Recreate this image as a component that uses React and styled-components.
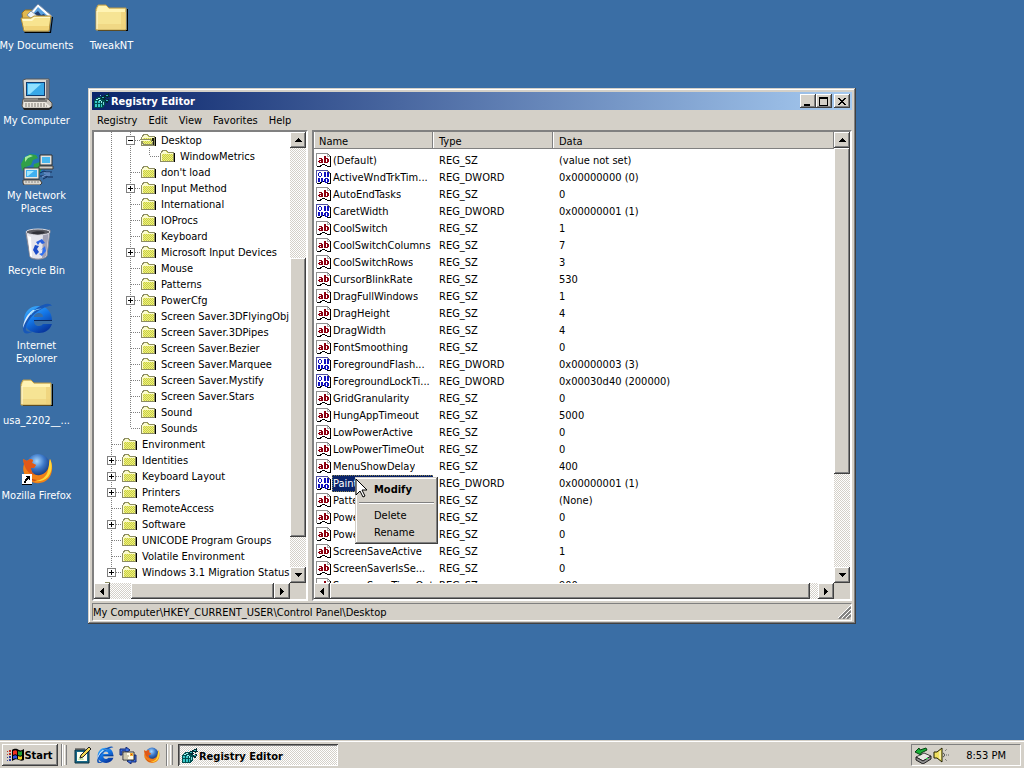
import React from 'react';
import styled, { createGlobalStyle, css } from 'styled-components';

const FACE = '#d4d0c8';
const SHADOW = '#808080';
const DARK = '#404040';
const NAVY = '#0a246a';

const GlobalStyle = createGlobalStyle`
  * { box-sizing: border-box; }
  body {
    margin: 0;
    font: 11px/13px "DejaVu Sans Condensed", "DejaVu Sans", "Liberation Sans", sans-serif;
    color: #000;
  }
  button { font: inherit; color: inherit; border: 0; padding: 0; background: none; }
  svg { display: block; flex: none; }
`;

const raised = css`
  background: ${FACE};
  box-shadow: inset -1px -1px ${DARK}, inset 1px 1px ${FACE}, inset -2px -2px ${SHADOW}, inset 2px 2px #fff;
`;
const buttonEdge = css`
  background: ${FACE};
  box-shadow: inset -1px -1px ${DARK}, inset 1px 1px #fff, inset -2px -2px ${SHADOW};
`;
const checker = css`
  background: repeating-conic-gradient(#fff 0 25%, ${FACE} 0 50%) 0 0 / 2px 2px;
`;

const Screen = styled.div`
  display: flex;
  flex-direction: column;
  height: 100vh;
  overflow: hidden;
  background: #3a6ea5;
`;
const Desktop = styled.main`
  position: relative;
  flex: 1;
  min-height: 0;
`;
const Shortcuts = styled.div`
  display: grid;
  grid-auto-flow: column;
  grid-template-rows: repeat(7, 75px);
  grid-auto-columns: 75px;
`;
const Shortcut = styled.button`
  display: flex;
  flex-direction: column;
  align-items: center;
  gap: 4px;
  padding-top: 3px;
  padding-right: 2px;
  color: #fff;
`;
const ShortcutLabel = styled.span`
  white-space: pre;
  text-align: center;
`;

const Window = styled.section`
  position: absolute;
  inset: 88px 168px 116px 88px;
  display: flex;
  flex-direction: column;
  padding: 4px 4px 3px;
  ${raised}
`;
const TitleBar = styled.header`
  display: flex;
  align-items: center;
  height: 18px;
  padding: 0 2px 0 1px;
  background: linear-gradient(90deg, ${NAVY}, #a6caf0);
  color: #fff;
`;
const Title = styled.h1`
  flex: 1;
  margin: 0 0 0 1px;
  font-size: 11px;
  line-height: 13px;
`;
const TitleButton = styled.button`
  width: 16px;
  height: 14px;
  display: flex;
  align-items: center;
  justify-content: center;
  margin-left: ${(p) => (p.$apart ? '2px' : '0')};
  ${buttonEdge}
`;
const MenuBar = styled.nav`
  display: flex;
  height: 20px;
  align-items: center;
`;
const MenuBarItem = styled.button`
  padding: 0 5px;
  margin-right: 1px;
`;
const Panes = styled.div`
  flex: 1;
  min-height: 0;
  display: flex;
  gap: 4px;
`;
const Pane = styled.div`
  display: flex;
  flex-direction: column;
  flex: ${(p) => p.$flex};
  min-width: 0;
  border: 2px solid;
  border-color: ${SHADOW} #fff #fff ${SHADOW};
  background: #fff;
`;
const PaneBody = styled.div`
  flex: 1;
  min-height: 0;
  display: flex;
`;
const PaneContent = styled.div`
  flex: 1;
  min-width: 0;
  overflow: hidden;
`;
const ScrollTrack = styled.div`
  display: flex;
  flex: ${(p) => (p.$vertical ? 'none' : 1)};
  flex-direction: ${(p) => (p.$vertical ? 'column' : 'row')};
  width: ${(p) => (p.$vertical ? '16px' : 'auto')};
  height: ${(p) => (p.$vertical ? 'auto' : '16px')};
  ${checker}
`;
const ScrollButton = styled.button`
  flex: none;
  width: 16px;
  height: 16px;
  display: flex;
  align-items: center;
  justify-content: center;
  ${buttonEdge}
`;
const Thumb = styled.div`
  flex: ${(p) => p.$size} 0 0;
  ${buttonEdge}
`;
const Space = styled.div`
  flex: ${(p) => p.$size} 0 0;
`;
const BottomScroll = styled.div`
  display: flex;
`;
const Corner = styled.div`
  width: 16px;
  height: 16px;
  background: ${FACE};
`;

const TreeList = styled.ul`
  list-style: none;
  margin: 0;
  padding: 0 0 0 8px;
`;
const TreeItem = styled.li`
  display: flex;
  align-items: center;
  height: 16px;
  white-space: nowrap;
`;
const TreeLabel = styled.span`
  margin-left: 3px;
`;

const Table = styled.table`
  width: 100%;
  table-layout: fixed;
  border-collapse: separate;
  border-spacing: 0;
  tbody::before {
    content: '';
    display: block;
    height: 3px;
  }
`;
const HeadCell = styled.th`
  width: ${(p) => p.$width || 'auto'};
  height: 17px;
  padding: 1px 0 0 ${(p) => p.$pad};
  font-weight: normal;
  text-align: left;
  background: ${FACE};
  box-shadow: inset -1px -1px ${SHADOW}, inset 1px 0 #fff;
`;
const Cell = styled.td`
  position: relative;
  height: 17px;
  padding: 0 0 0 6px;
  white-space: nowrap;
`;
const NameCell = styled(Cell)`
  padding: 0 0 0 2px;
`;
const NameBox = styled.div`
  display: flex;
  align-items: center;
  height: 17px;
`;
const NameText = styled.span`
  padding: 1px 0 1px 1px;
  height: 17px;
  line-height: 15px;
  overflow: hidden;
  flex: ${(p) => (p.$selected ? 1 : 'none')};
  background: ${(p) => (p.$selected ? NAVY : 'transparent')};
  color: ${(p) => (p.$selected ? '#fff' : '#000')};
  outline: ${(p) => (p.$selected ? '1px dotted #8c8450' : 'none')};
  outline-offset: -1px;
`;

const ContextMenu = styled.div`
  position: absolute;
  z-index: 2;
  top: 2px;
  left: 41px;
  width: 83px;
  padding: 4px 3px 3px;
  display: flex;
  flex-direction: column;
  ${raised}
`;
const ContextItem = styled.button`
  height: 17px;
  padding-left: 16px;
  text-align: left;
  font-weight: ${(p) => (p.$strong ? 'bold' : 'normal')};
`;
const Divider = styled.hr`
  width: 75px;
  margin: 4px 1px 3px;
  border: 0;
  border-top: 1px solid ${SHADOW};
  border-bottom: 1px solid #fff;
`;
const Pointer = styled.svg`
  position: absolute;
  z-index: 3;
  top: 3px;
  left: 41px;
`;

const StatusBar = styled.footer`
  display: flex;
  align-items: center;
  height: 18px;
  margin-top: 2px;
  border: 1px solid;
  border-color: ${SHADOW} #fff #fff ${SHADOW};
`;
const StatusText = styled.span`
  flex: 1;
`;

const Taskbar = styled.footer`
  display: flex;
  align-items: center;
  height: 28px;
  padding: 2px 3px 0 2px;
  background: ${FACE};
  box-shadow: inset 0 1px ${FACE}, inset 0 2px #fff;
`;
const StartButton = styled.button`
  display: flex;
  align-items: center;
  justify-content: center;
  width: 56px;
  height: 22px;
  font-weight: bold;
  ${buttonEdge}
`;
const Ridge = styled.div`
  width: 3px;
  height: 20px;
  margin: 0 ${(p) => p.$after} 0 ${(p) => p.$before};
  border-left: 1px solid #fff;
  border-right: 1px solid ${SHADOW};
`;
const Seam = styled.div`
  width: 2px;
  height: 22px;
  margin-left: ${(p) => p.$before};
  border-left: 1px solid ${SHADOW};
  border-right: 1px solid #fff;
`;
const QuickLaunch = styled.div`
  display: flex;
  gap: 5px;
`;
const QuickButton = styled.button`
  width: 18px;
  height: 18px;
  display: flex;
  align-items: center;
  justify-content: center;
`;
const TaskButton = styled.button`
  display: flex;
  align-items: center;
  gap: 1px;
  width: 160px;
  height: 22px;
  padding: 2px 0 0 3px;
  font-weight: bold;
  ${checker}
  box-shadow: inset 1px 1px ${DARK}, inset -1px -1px #fff, inset 2px 2px ${SHADOW};
`;
const Tray = styled.div`
  display: flex;
  align-items: center;
  gap: 1px;
  height: 22px;
  margin-left: auto;
  padding: 0 14px 0 2px;
  border: 1px solid;
  border-color: ${SHADOW} #fff #fff ${SHADOW};
`;
const Clock = styled.time`
  margin-left: 16px;
`;

const ARROWS = {
  up: 'M3 0h1v1h1v1h1v1h1v1H0V3h1V2h1V1h1z',
  down: 'M0 0h7v1H6v1H5v1H4v1H3V3H2V2H1V1H0z',
  left: 'M3 0h1v7H3V6H2V5H1V4H0V3h1V2h1V1h1z',
  right: 'M0 0h1v1h1v1h1v1h1v1H3v1H2v1H1v1H0z',
};

function Arrow({ dir }) {
  const tall = dir === 'left' || dir === 'right';
  return (
    <svg width={tall ? 4 : 7} height={tall ? 7 : 4} shapeRendering="crispEdges">
      <path d={ARROWS[dir]} />
    </svg>
  );
}

function ScrollBar({ vertical, parts }) {
  return (
    <ScrollTrack $vertical={vertical}>
      <ScrollButton aria-label={vertical ? 'Scroll up' : 'Scroll left'}>
        <Arrow dir={vertical ? 'up' : 'left'} />
      </ScrollButton>
      <Space $size={parts[0]} />
      <Thumb $size={parts[1]} />
      <Space $size={parts[2]} />
      <ScrollButton aria-label={vertical ? 'Scroll down' : 'Scroll right'}>
        <Arrow dir={vertical ? 'down' : 'right'} />
      </ScrollButton>
    </ScrollTrack>
  );
}

/* ---- small icons ---- */

function TreeFolder({ open }) {
  return (
    <svg width="18" height="16" viewBox="0 0 18 16" shapeRendering="crispEdges">
      <defs>
        <pattern id="dither" width="2" height="2" patternUnits="userSpaceOnUse">
          <path d="M0 0h2v2H0z" fill="#f4f478" />
          <path d="M0 0h1v1H0zM1 1h1v1H1z" fill="#c4cc4c" />
        </pattern>
      </defs>
      <path d="M2 14h14V5h-1v8H2z" fill="#000" />
      <path d="M1 5h1V3h1V2h5v1h1v1h6v10H1z" fill="#8c8c64" />
      <path d="M2 5h1V4h1V3h4v1h1v1h5v8H2z" fill="url(#dither)" />
      <path d="M2 5h1V4h1V3h3v1h1v1h6v1H3v7H2z" fill="#fbfbd0" />
      {open && (
        <>
          <path d="M12 6h2v7h-1V9h-1z" fill="#202010" />
          <path d="M0 7h11v1h1v2h1v3H3v-1H2v-2H1V8H0z" fill="#8c8c64" />
          <path d="M2 8h9v2h1v2H4v-1H3V9H2z" fill="url(#dither)" />
          <path d="M1 8h9v1H1z" fill="#fbfbd0" />
        </>
      )}
    </svg>
  );
}

function Connector({ line, branch, box }) {
  return (
    <svg width="19" height="16" shapeRendering="crispEdges" stroke="#808080" fill="none">
      {line !== 'none' && (
        <path d={line === 'half' ? 'M9.500 0V8' : 'M9.500 0V16'} strokeDasharray="1 1" />
      )}
      {branch && <path d="M10 8.500H19" strokeDasharray="1 1" />}
      {box && (
        <>
          <rect x="5.500" y="4.500" width="8" height="8" fill="#fff" />
          <path d="M7 8.500h5" stroke="#000" />
          {box === 'plus' && <path d="M9.500 6v5" stroke="#000" />}
        </>
      )}
    </svg>
  );
}

function ValueIcon({ binary }) {
  return (
    <svg width="16" height="16" viewBox="0 0 16 16" shapeRendering="crispEdges">
      <path d="M13 2h1v1h1v11h-4v-1H9v-1H6v1H5v1H1v-1h3v-1h2v-1h3v1h2v1h3V4h-1z" fill="#000" />
      <path d="M0 0h12v1H1v12H0z" fill={binary ? '#5050a0' : '#909090'} />
      <path d="M12 1h1v1h-1zM13 2h1v1h-1z" fill="#606060" />
      <path d="M1 1h11v2h2v10h-3v-1H9v-1H6v1H4v1H1z" fill="#fff" />
      <path d="M11 1h1v2h2v1h-3z" fill="#b0b0b0" />
      {binary ? (
        <path
          d="M3 2h2v1h1v3H5v1H3V6H2V3h1zM3 3v3h2V3zM8 2h2v5H8zM11 2h2v5h-2zM2 8h2v4H2zM5 8h2v4H5zM9 8h3v1h1v3h-1v1H9v-1H8V9h1zM10 9v3h1V9z"
          fill="#1010c0"
          fillRule="evenodd"
        />
      ) : (
        <path
          d="M3 5h3v1h1v4H3V9H2V8h1V7h2V6H3zM4 8v1h1V8zM8 3h2v2h2v1h1v3h-1v1H8zM10 6v3h1V6z"
          fill="#8c0010"
          fillRule="evenodd"
        />
      )}
    </svg>
  );
}

function RegeditIcon() {
  return (
    <svg width="17" height="16" viewBox="0 0 17 16" shapeRendering="crispEdges">
      <path d="M1 7h1V6h1V5h1V4h4v2h4v7h-1v1h-1v1H1z" fill="#005050" />
      <path d="M2 8h2v2H2zM5 8h2v2H5zM2 11h2v3H2zM5 11h2v3H5zM8 11h1v3H8z" fill="#38c8c8" />
      <path d="M3 6h2v1H3zM5 5h2v1H5zM6 7h2v1H6zM8 8h1v2H8z" fill="#a0f4f4" />
      <path d="M8 4h1V3h2V2h1v3h1v1h-1v1h-2V6H8zM12 2h1V1h2V0h1v3h1v1h-2v1h-1V4h-2zM12 7h2V6h2v2h-1v2h-2V9h-1z" fill="#002c34" />
      <path d="M9 4h2v1H9zM13 2h2v1h-2zM13 7h2v1h-2z" fill="#38b8b8" />
      <path d="M7 2h1v1H7zM10 9h1v3h-1z" fill="#78d8d8" />
    </svg>
  );
}

function FlagIcon() {
  return (
    <svg width="17" height="16" viewBox="0 0 17 16">
      <path d="M5 3c3-2 5-1 7 0s3 0 5-1v11c-2 1-3 1-5 0s-4-1-7 1z" fill="#000" />
      <path d="M6 4c2-1 3-1 4 0v4C9 7 8 7 6 8z" fill="#f03020" />
      <path d="M11 4c2 1 3 1 4 0v4c-1 1-2 1-4 0z" fill="#20a030" />
      <path d="M6 9c2-1 3-1 4 0v3c-1-1-2-1-4 0z" fill="#3050e0" />
      <path d="M11 9c2 1 3 1 4 0v3c-1 1-2 1-4 0z" fill="#f0d020" />
      <path d="M0 4h1v1H0zM2 3h2v2H2zM0 7h1v1H0zM2 6h2v2H2z" fill="#c03020" />
      <path d="M0 10h1v1H0zM2 9h2v2H2zM0 13h1v1H0zM2 12h2v2H2z" fill="#3040a0" />
    </svg>
  );
}

function IeMark({ size }) {
  return (
    <svg width={size} height={size} viewBox="0 0 32 32">
      <defs>
        <linearGradient id={`ie${size}`} x1="0" y1="0" x2="0.600" y2="1">
          <stop offset="0" stopColor="#48b8ff" />
          <stop offset="0.500" stopColor="#1478e8" />
          <stop offset="1" stopColor="#0838a0" />
        </linearGradient>
      </defs>
      <path
        fillRule="evenodd"
        d="M17 3c9 0 14 6 14 15H13c0 3 2 5 5 5 2 0 3-1 4-2h9c-2 6-7 9-13 9C9 30 3 25 3 17S9 3 17 3zM13 14h9c0-3-2-4-4-4s-5 1-5 4z"
        fill={`url(#ie${size})`}
      />
      <path
        d="M31 3c-2-4-9-2-15 2C8 10 1 20 2 26c0 6 6 5 11 2-4 1-7 1-8-1-1-5 4-13 11-18C23 4 29 2 31 3z"
        fill="#1858b8"
      />
      <path d="M12 7C6 11 2 19 2 25c2-6 6-13 12-18z" fill="#d8ecff" />
      <path d="M9 11c3-4 8-6 12-5-5 0-8 2-11 6z" fill="#8cd4ff" />
      <path d="M13 17h18v1H13z" fill="#082860" />
    </svg>
  );
}

function FirefoxMark({ size, shortcut }) {
  return (
    <svg width={size} height={size} viewBox="0 0 32 32">
      <defs>
        <radialGradient id={`ff${size}`} cx="0.450" cy="0.300" r="0.700">
          <stop offset="0" stopColor="#a8d8ff" />
          <stop offset="0.450" stopColor="#3c78c8" />
          <stop offset="1" stopColor="#0c2868" />
        </radialGradient>
      </defs>
      <circle cx="17" cy="13" r="12" fill={`url(#ff${size})`} />
      <path
        d="M29 6c3 6 3 14-1 19-5 6-14 7-20 2C3 23 1 17 3 11l-1-5 4 2c2-2 4-2 6-1l-1 3 4 2-2 3h-3c0 5 4 8 9 7 5-1 8-5 9-9 0-3 0-5 1-7z"
        fill="#f08018"
      />
      <path d="M29 6c3 6 2 13-2 18-4 4-9 5-14 4 7 0 13-4 14-11 1-4 1-7 2-11z" fill="#ffd838" />
      <path d="M3 11l-1-5 4 2c2-2 4-2 6-1l-1 3 4 2-2 3h-3c0 4 2 6 5 7-6 0-10-4-12-11z" fill="#e05818" />
      <path d="M5 20c2 4 6 7 11 7-3 2-9 0-11-7z" fill="#b83810" />
      {shortcut && (
        <g shapeRendering="crispEdges">
          <path d="M1 21h10v11H1z" fill="#000" />
          <path d="M1 21h10v10H1z" fill="#fff" />
          <path d="M5 23h4v4H8v-1H7v1H6v1H5v2H3v-2h1v-2h1v-1h1v-1H5z" fill="#000" />
        </g>
      )}
    </svg>
  );
}

/* ---- desktop icons ---- */

function BigFolder() {
  return (
    <svg width="34" height="32" viewBox="0 0 34 32">
      <path d="M3 28h30V6h-1v21H3z" fill="#000" />
      <path d="M1 6l2-4h8l3 3h17v22H1z" fill="#f6e494" stroke="#b89848" />
      <path d="M2 7l2-4h7l3 3h16v3H2z" fill="#fff4b4" />
      <path d="M26 9h5v17h-5z" fill="#eed078" opacity="0.700" />
      <path d="M2 21h28v5H2z" fill="#ecd07c" opacity="0.600" />
      <path d="M2 8v18" stroke="#fffce0" />
    </svg>
  );
}

function DocumentsIcon() {
  return (
    <svg width="34" height="32" viewBox="0 0 34 32">
      <path d="M2 10l3-3h7l3 3h14v18H4z" fill="#e0b850" stroke="#987020" />
      <path d="M18 1l14 12-7 8L8 12z" fill="#fff" stroke="#7088a8" />
      <path d="M18 4l10 9-7 7-9-8z" fill="#58a0e0" />
      <path d="M14 11l4-3 3 4 3-1 2 3-5 5z" fill="#203c70" />
      <path d="M11 8l-4 4 14 12 4-5z" fill="#eef4fa" stroke="#8898a8" />
      <path d="M1 15h10l3-2h17l-2 15H4z" fill="#f8e490" stroke="#b08c38" />
      <path d="M2 16h9l3-2h16v1H15l-3 3H3z" fill="#fff8c8" />
      <path d="M4 29h26l2-15h1l-2 16H5z" fill="#000" />
      <path d="M4 23h25l-1 4H5z" fill="#ecc868" opacity="0.600" />
    </svg>
  );
}

function ComputerIcon() {
  return (
    <svg width="34" height="32" viewBox="0 0 34 32">
      <path d="M3 2l3-1h23v19l-3 1H4z" fill="#d8d8d4" stroke="#585858" />
      <path d="M26 2h3v18l-3 1z" fill="#787880" />
      <path d="M6 4h19v14H6z" fill="#103c70" />
      <path d="M7 5h17v12H7z" fill="#38a8e8" />
      <path d="M8 6h13L10 16H8z" fill="#90e0ff" />
      <path d="M3 21h25l4 4v4l-3 2H4l-2-3z" fill="#c8c4bc" stroke="#585450" />
      <path d="M4 23h23M18 21h7" stroke="#383838" />
      <path d="M4 24h21l6 5H3z" fill="#ece8e0" />
      <path d="M5 26h20M5 28h22" stroke="#807c74" strokeDasharray="2 1" />
      <path d="M3 30h26l3-2v2l-3 2H4z" fill="#202020" />
    </svg>
  );
}

function NetworkIcon() {
  return (
    <svg width="34" height="32" viewBox="0 0 34 32">
      <circle cx="13" cy="12" r="12" fill="#2474b8" />
      <path d="M4 5l6-4 6 1 2 3-5 2-2 5-5 2-4 4-1-7zM14 11l6-2 2 6-3 7-6-3z" fill="#30a048" />
      <path d="M5 4l5-2 3 1-5 2-3 4z" fill="#a8e8a0" />
      <path d="M20 2h12v10H20z" fill="#e4e4e0" stroke="#303030" />
      <path d="M22 4h8v6h-8z" fill="#48b8f0" />
      <path d="M19 13h14v3H19z" fill="#d0ccc4" stroke="#403c38" />
      <path d="M4 15h15v11H4z" fill="#e8e8e4" stroke="#404040" />
      <path d="M6 17h11v7H6z" fill="#40b0f0" />
      <path d="M7 18h7l-6 5H7z" fill="#a0e8ff" />
      <path d="M3 27h17l2 3-2 2H4l-1-2z" fill="#dcd8d0" stroke="#403c38" />
      <path d="M5 29h14" stroke="#888" strokeDasharray="2 1" />
      <path d="M20 20l4-2 2 1h6M20 23h6l2 1h5M23 26l4-2" stroke="#142c58" fill="none" />
      <path d="M24 20h6M22 24l4-2h4" stroke="#80a0d8" fill="none" />
    </svg>
  );
}

function RecycleIcon() {
  return (
    <svg width="34" height="32" viewBox="0 0 34 32">
      <path d="M6 5l24-3-3 26c-3 4-14 4-17 1z" fill="#e4e4ec" stroke="#888894" />
      <path d="M23 6l6-4-3 26-4 3z" fill="#a0a0b4" />
      <path d="M8 8l3 1 1 20-2-1z" fill="#fff" />
      <ellipse cx="18" cy="4" rx="12" ry="3" fill="#585860" stroke="#d8d8e0" />
      <path d="M11 5c3-2 11-2 14-1-2 3-11 3-14 1z" fill="#303038" />
      <path d="M16 14l6-3 3 4-3 1-2-2-2 3z" fill="#2860e0" />
      <path d="M15 17l4 1-2 3 2 3-3 3-3-5z" fill="#1c4cc8" />
      <path d="M25 18l1 5-4 5-3-2 3-1 1-4-2 1z" fill="#3070f0" />
    </svg>
  );
}

function SketchpadIcon() {
  return (
    <svg width="17" height="17" viewBox="0 0 17 17">
      <path d="M1 3h14v13H1z" fill="#186888" stroke="#083040" />
      <path d="M3 5h10v9H3z" fill="#fffff0" />
      <path d="M4 13l3-6 3 6z" fill="#c8e8b0" />
      <path d="M2 3V1M4 3V1M6 3V1M8 3V1M10 3V1" stroke="#303030" />
      <path d="M15 0l2 2-8 8-3 1 1-3z" fill="#f0d850" stroke="#202020" />
    </svg>
  );
}

function OutlookIcon() {
  return (
    <svg width="18" height="17" viewBox="0 0 18 17">
      <path d="M1 2h6V0l4 3-4 3V4H3v4H1z" fill="#3c70e0" stroke="#102878" />
      <path d="M17 8v7h-5v2l-4-3 4-3v2h3V8z" fill="#3c70e0" stroke="#102878" />
      <path d="M4 5h11v8H4z" fill="#fffbe8" stroke="#303030" />
      <path d="M5 7h3M5 9h5M5 11h4" stroke="#a09878" />
      <path d="M11 6h3v3h-3z" fill="#f0b030" />
      <path d="M12 7h1v1h-1z" fill="#d03010" />
    </svg>
  );
}

function EjectIcon() {
  return (
    <svg width="18" height="17" viewBox="0 0 18 17">
      <path d="M2 10l8-4 7 3-8 5z" fill="#e8e8e4" stroke="#404040" />
      <path d="M2 10v3l7 4 8-5V9l-8 5z" fill="#909090" stroke="#202020" />
      <path d="M1 5l4-4 1 2 6-2 1 2-6 3v2z" fill="#18b038" stroke="#044010" />
      <path d="M12 11h2v1h-2z" fill="#20e040" />
    </svg>
  );
}

function SpeakerIcon() {
  return (
    <svg width="16" height="16" viewBox="0 0 16 16">
      <path d="M1 5h3l5-4v14l-5-4H1z" fill="#f0e060" stroke="#202000" />
      <path d="M7 4v8" stroke="#fffce0" />
      <path d="M10 6c2 1 2 3 0 4" fill="none" stroke="#303030" />
      <path d="M12 4l2-2M13 8h3M12 12l2 2" stroke="#606060" strokeDasharray="1 1" />
    </svg>
  );
}

/* ---- data ---- */

const SHORTCUTS = [
  ['My Documents', <DocumentsIcon />],
  ['My Computer', <ComputerIcon />],
  ['My Network\nPlaces', <NetworkIcon />],
  ['Recycle Bin', <RecycleIcon />],
  ['Internet\nExplorer', <IeMark size={32} />],
  ['usa_2202__...', <BigFolder />],
  ['Mozilla Firefox', <FirefoxMark size={32} shortcut />],
  ['TweakNT', <BigFolder />],
];

// [label, depth, expander]
const TREE = [
  ['Desktop', 2, 'minus'],
  ['WindowMetrics', 3],
  ["don't load", 2],
  ['Input Method', 2, 'plus'],
  ['International', 2],
  ['IOProcs', 2],
  ['Keyboard', 2],
  ['Microsoft Input Devices', 2, 'plus'],
  ['Mouse', 2],
  ['Patterns', 2],
  ['PowerCfg', 2, 'plus'],
  ['Screen Saver.3DFlyingObj', 2],
  ['Screen Saver.3DPipes', 2],
  ['Screen Saver.Bezier', 2],
  ['Screen Saver.Marquee', 2],
  ['Screen Saver.Mystify', 2],
  ['Screen Saver.Stars', 2],
  ['Sound', 2],
  ['Sounds', 2],
  ['Environment', 1],
  ['Identities', 1, 'plus'],
  ['Keyboard Layout', 1, 'plus'],
  ['Printers', 1, 'plus'],
  ['RemoteAccess', 1],
  ['Software', 1, 'plus'],
  ['UNICODE Program Groups', 1],
  ['Volatile Environment', 1],
  ['Windows 3.1 Migration Status', 1, 'plus'],
];

const SZ = 'REG_SZ';
const DWORD = 'REG_DWORD';
const VALUES = [
  ['(Default)', SZ, '(value not set)'],
  ['ActiveWndTrkTim...', DWORD, '0x00000000 (0)'],
  ['AutoEndTasks', SZ, '0'],
  ['CaretWidth', DWORD, '0x00000001 (1)'],
  ['CoolSwitch', SZ, '1'],
  ['CoolSwitchColumns', SZ, '7'],
  ['CoolSwitchRows', SZ, '3'],
  ['CursorBlinkRate', SZ, '530'],
  ['DragFullWindows', SZ, '1'],
  ['DragHeight', SZ, '4'],
  ['DragWidth', SZ, '4'],
  ['FontSmoothing', SZ, '0'],
  ['ForegroundFlash...', DWORD, '0x00000003 (3)'],
  ['ForegroundLockTi...', DWORD, '0x00030d40 (200000)'],
  ['GridGranularity', SZ, '0'],
  ['HungAppTimeout', SZ, '5000'],
  ['LowPowerActive', SZ, '0'],
  ['LowPowerTimeOut', SZ, '0'],
  ['MenuShowDelay', SZ, '400'],
  ['PaintDesktop...', DWORD, '0x00000001 (1)'],
  ['Pattern', SZ, '(None)'],
  ['PowerOffActive', SZ, '0'],
  ['PowerOffTime', SZ, '0'],
  ['ScreenSaveActive', SZ, '1'],
  ['ScreenSaverIsSe...', SZ, '0'],
  ['ScreenSaveTimeOut', SZ, '900'],
];
const SELECTED = 19;

function TreeRow({ index }) {
  const [label, depth, box] = TREE[index];
  const next = TREE[index + 1];
  const cells = [];
  for (let level = 1; level <= depth; level += 1) {
    const own = level === depth;
    const last = own && level > 1 && (!next || next[1] < level);
    cells.push(
      <Connector key={level} line={last ? 'half' : 'full'} branch={own} box={own ? box : undefined} />
    );
  }
  return (
    <TreeItem>
      {cells}
      <TreeFolder open={index === 0} />
      <TreeLabel>{label}</TreeLabel>
    </TreeItem>
  );
}

function RegistryTree() {
  return (
    <TreeList>
      {TREE.map((row, index) => (
        <TreeRow key={row[0]} index={index} />
      ))}
      <TreeItem>
        <TreeFolder />
      </TreeItem>
    </TreeList>
  );
}

function ValueMenu() {
  return (
    <>
      <ContextMenu role="menu">
        <ContextItem role="menuitem" $strong>Modify</ContextItem>
        <Divider />
        <ContextItem role="menuitem">Delete</ContextItem>
        <ContextItem role="menuitem">Rename</ContextItem>
      </ContextMenu>
      <Pointer width="13" height="21" viewBox="0 0 13 21">
        <path d="M1 1v16l4-4 3 6 2-1-3-6h5z" fill="#fff" stroke="#000" />
      </Pointer>
    </>
  );
}

function ValueTable() {
  return (
    <Table>
      <thead>
        <tr>
          <HeadCell $width="119px" $pad="5px">Name</HeadCell>
          <HeadCell $width="120px" $pad="6px">Type</HeadCell>
          <HeadCell $pad="6px">Data</HeadCell>
        </tr>
      </thead>
      <tbody>
        {VALUES.map(([name, type, data], index) => (
          <tr key={name}>
            <NameCell>
              <NameBox>
                <ValueIcon binary={type === DWORD} />
                <NameText $selected={index === SELECTED}>{name}</NameText>
              </NameBox>
              {index === SELECTED && <ValueMenu />}
            </NameCell>
            <Cell>{type}</Cell>
            <Cell>{data}</Cell>
          </tr>
        ))}
      </tbody>
    </Table>
  );
}

function RegistryWindow() {
  return (
    <Window>
      <TitleBar>
        <RegeditIcon />
        <Title>Registry Editor</Title>
        <TitleButton aria-label="Minimize">
          <svg width="10" height="9" shapeRendering="crispEdges"><path d="M1 7h6v2H1z" /></svg>
        </TitleButton>
        <TitleButton aria-label="Maximize">
          <svg width="10" height="9" shapeRendering="crispEdges">
            <path d="M0 0h9v9H0zM1 2v6h7V2z" fillRule="evenodd" />
          </svg>
        </TitleButton>
        <TitleButton aria-label="Close" $apart>
          <svg width="9" height="7" shapeRendering="crispEdges">
            <path d="M0 0h2v1h1v1h2V1h1V0h2v1H7v1H6v1H5v1h1v1h1v1h1v1H6V6H5V5H3v1H2v1H0V6h1V5h1V4h1V3H2V2H1V1H0z" />
          </svg>
        </TitleButton>
      </TitleBar>
      <MenuBar>
        {['Registry', 'Edit', 'View', 'Favorites', 'Help'].map((name) => (
          <MenuBarItem key={name}>{name}</MenuBarItem>
        ))}
      </MenuBar>
      <Panes>
        <Pane $flex="0 0 216px">
          <PaneBody>
            <PaneContent><RegistryTree /></PaneContent>
            <ScrollBar vertical parts={[110, 280, 30]} />
          </PaneBody>
          <BottomScroll>
            <ScrollBar parts={[21, 143, 0]} />
            <Corner />
          </BottomScroll>
        </Pane>
        <Pane $flex="1">
          <PaneBody>
            <PaneContent><ValueTable /></PaneContent>
            <ScrollBar vertical parts={[0, 327, 93]} />
          </PaneBody>
          <BottomScroll>
            <ScrollBar parts={[0, 480, 8]} />
            <Corner />
          </BottomScroll>
        </Pane>
      </Panes>
      <StatusBar>
        <StatusText>My Computer\HKEY_CURRENT_USER\Control Panel\Desktop</StatusText>
        <svg width="13" height="14" viewBox="0 0 13 14">
          <path d="M1 14L13 2M5 14l8-8M9 14l4-4" stroke="#808080" strokeWidth="2" />
          <path d="M0 13L13 0M4 13l9-9M8 13l5-5" stroke="#fff" />
        </svg>
      </StatusBar>
    </Window>
  );
}

export default function App() {
  return (
    <Screen>
      <GlobalStyle />
      <Desktop>
        <Shortcuts>
          {SHORTCUTS.map(([label, icon]) => (
            <Shortcut key={label}>
              {icon}
              <ShortcutLabel>{label}</ShortcutLabel>
            </Shortcut>
          ))}
        </Shortcuts>
        <RegistryWindow />
      </Desktop>
      <Taskbar>
        <StartButton>
          <FlagIcon />
          Start
        </StartButton>
        <Seam $before="3px" />
        <Ridge $before="1px" $after="6px" />
        <QuickLaunch>
          <QuickButton aria-label="Show Desktop"><SketchpadIcon /></QuickButton>
          <QuickButton aria-label="Launch Internet Explorer"><IeMark size={18} /></QuickButton>
          <QuickButton aria-label="Launch Outlook Express"><OutlookIcon /></QuickButton>
          <QuickButton aria-label="Launch Firefox"><FirefoxMark size={17} /></QuickButton>
        </QuickLaunch>
        <Seam $before="6px" />
        <Ridge $before="2px" $after="5px" />
        <TaskButton>
          <RegeditIcon />
          Registry Editor
        </TaskButton>
        <Tray>
          <EjectIcon />
          <SpeakerIcon />
          <Clock>8:53 PM</Clock>
        </Tray>
      </Taskbar>
    </Screen>
  );
}
